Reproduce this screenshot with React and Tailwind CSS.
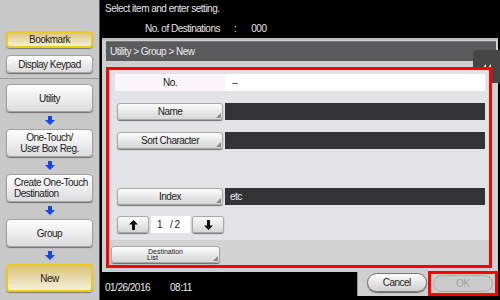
const font = { fontFamily: '"Liberation Sans", Arial, sans-serif' };

const BlueArrow = () => (
	<div className="flex h-[17px] items-center justify-center">
		<svg width="10" height="9" viewBox="0 0 10 9">
			<path d="M3 0h4v4h3L5 9 0 4h3z" fill="#1746e8" />
		</svg>
	</div>
);

const SideBtn = ({ children, gold, left }) => (
	<div
		className={
			gold
				? "ml-[6px] flex h-[28px] w-[87px] items-center justify-center whitespace-nowrap rounded-[4px] border-2 border-[#eccb1c] bg-linear-to-b from-[#d9c27c] to-[#f6f0d8] text-[10px] leading-[11px] text-[#222] shadow-[0_1px_1px_rgba(0,0,0,0.4)]"
				: left
				? "ml-[6px] flex h-[28px] w-[87px] flex-col justify-center whitespace-nowrap rounded-[4px] border border-[#a2a2a2] bg-linear-to-b from-[#fefefe] to-[#dcdcdc] pl-[7px] text-[10px] leading-[11px] text-[#222] shadow-[0_1px_1px_rgba(0,0,0,0.45)]"
				: "ml-[6px] flex h-[28px] w-[87px] flex-col items-center justify-center whitespace-nowrap rounded-[4px] border border-[#a2a2a2] bg-linear-to-b from-[#fefefe] to-[#dcdcdc] text-center text-[10px] leading-[11px] text-[#222] shadow-[0_1px_1px_rgba(0,0,0,0.45)]"
		}
	>
		{children}
	</div>
);

const Corner = () => (
	<svg className="absolute bottom-[1px] right-[1px]" width="5" height="5" viewBox="0 0 5 5">
		<path d="M5 0v5H0z" fill="#8a8a8a" />
	</svg>
);

const FieldBtn = ({ children }) => (
	<div className="relative mx-[2px] flex h-[17px] w-[106px] items-center justify-center whitespace-nowrap rounded-[3px] border border-[#a9a9a9] bg-linear-to-b from-[#fbfbfb] to-[#d6d6d6] text-[10px] text-[#222] shadow-[0_1px_1px_rgba(0,0,0,0.5)]">
		{children}
		<Corner />
	</div>
);

const Row = ({ label, className }) => (
	<div className={className}>
		<div className="flex h-[17px] items-stretch pl-[6px] pr-[4px]">
			<div className="flex w-[110px] items-center">
				<FieldBtn>{label}</FieldBtn>
			</div>
			<div className="w-[260px] bg-[#333335]" />
		</div>
	</div>
);

export default function App() {
	return (
		<div className="flex h-[300px] w-[500px] overflow-hidden bg-black tracking-[-0.5px]" style={font}>
			<div className="flex w-[100px] flex-col border-r border-[#555] bg-[#c8c8c8]">
				<div className="h-[79px] border-b border-[#9a9a9a] pt-[31px]">
					<div className="ml-[6px] flex h-[17px] w-[87px] items-center justify-center rounded-[4px] border-2 border-[#eccb1c] bg-linear-to-b from-[#dcc57e] to-[#f6f0d8] text-[10px] text-[#222] shadow-[0_1px_1px_rgba(0,0,0,0.4)]">
						Bookmark
					</div>
					<div className="ml-[6px] mt-[7px] flex h-[18px] w-[87px] items-center justify-center whitespace-nowrap rounded-[4px] border border-[#a2a2a2] bg-linear-to-b from-[#fefefe] to-[#dcdcdc] text-[10px] text-[#222] shadow-[0_1px_1px_rgba(0,0,0,0.45)]">
						Display Keypad
					</div>
				</div>
				<div className="pt-[5px]">
					<SideBtn>Utility</SideBtn>
					<BlueArrow />
					<SideBtn>
						<span>One-Touch/</span>
						<span>User Box Reg.</span>
					</SideBtn>
					<BlueArrow />
					<SideBtn left>
						<span>Create One-Touch</span>
						<span>Destination</span>
					</SideBtn>
					<BlueArrow />
					<SideBtn>Group</SideBtn>
					<BlueArrow />
					<SideBtn gold>New</SideBtn>
				</div>
			</div>

			<div className="relative flex flex-1 flex-col">
				<div className="h-[38px] whitespace-nowrap pl-[5px] text-[10px] text-[#e6e6e6]">
					<div className="pt-[3px] leading-[12px]">Select item and enter setting.</div>
					<div className="mt-[8px] flex leading-[12px]">
						<span className="ml-[40px]">No. of Destinations</span>
						<span className="ml-[14px]">:</span>
						<span className="ml-[15px]">000</span>
					</div>
				</div>

				<div className="mx-[2px] flex h-[234px] flex-col border-t-2 border-[#bdbdbd] bg-[#cfcfcf] pl-[4px] pr-[2px]">
					<div className="mt-[1px] flex h-[20px] items-center border-t border-[#777] bg-[#5b5a5d] pl-[4px] text-[10px] text-[#ececec]">
						Utility &gt; Group &gt; New
					</div>
					<div className="h-[6px]" />
					<div className="relative z-10 flex h-[201px] w-[386px] flex-col border-[3px] border-[#ff0000]">
						<div className="h-[170px] bg-[#e3e2e5] pt-[4px]">
							<div className="flex h-[17px] pl-[6px] pr-[4px]">
								<div className="flex w-[110px] items-center justify-center bg-[#f8f4f8] text-[10px] text-[#222]">No.</div>
								<div className="flex w-[260px] items-center bg-white pl-[7px] text-[10px] text-[#333]">--</div>
							</div>
							<Row label="Name" className="mt-[12px]" />
							<Row label="Sort Character" className="mt-[12px]" />
							<div className="mt-[39px] flex h-[17px] pl-[6px] pr-[4px]">
								<div className="flex w-[110px] items-center">
									<FieldBtn>Index</FieldBtn>
								</div>
								<div className="flex w-[260px] items-center bg-[#333335] pl-[5px] text-[10px] text-[#f0f0f0]">etc</div>
							</div>
							<div className="mt-[11px] flex h-[17px] items-center pl-[8px]">
								<div className="flex h-[17px] w-[32px] items-center justify-center rounded-[3px] border border-[#a9a9a9] bg-linear-to-b from-[#fbfbfb] to-[#d6d6d6] shadow-[0_1px_1px_rgba(0,0,0,0.5)]">
									<svg width="9" height="10" viewBox="0 0 9 10">
										<path d="M4.5 0L9 4.5H6V10H3V4.5H0z" fill="#111" />
									</svg>
								</div>
								<div className="mx-[2px] flex h-[17px] w-[39px] items-center bg-white pl-[6px] text-[10px] text-[#222]">
									<span>1</span>
									<span className="ml-[8px]">/ 2</span>
								</div>
								<div className="flex h-[17px] w-[32px] items-center justify-center rounded-[3px] border border-[#a9a9a9] bg-linear-to-b from-[#fbfbfb] to-[#d6d6d6] shadow-[0_1px_1px_rgba(0,0,0,0.5)]">
									<svg width="9" height="10" viewBox="0 0 9 10">
										<path d="M4.5 10L9 5.5H6V0H3V5.5H0z" fill="#111" />
									</svg>
								</div>
							</div>
						</div>
						<div className="flex-1 bg-[#d3d3d3] pl-[2px] pt-[6px]">
							<div className="relative flex h-[17px] w-[109px] flex-col items-center justify-center rounded-[3px] border border-[#a9a9a9] bg-linear-to-b from-[#fbfbfb] to-[#d6d6d6] text-[7px] leading-[6px] tracking-normal text-[#222] shadow-[0_1px_1px_rgba(0,0,0,0.5)]">
								<span>Destination</span>
								<span className="-ml-[26px]">List</span>
								<Corner />
							</div>
						</div>
					</div>
				</div>

				<div className="flex flex-1">
					<div className="flex flex-1 items-center pl-[5px] pt-[2px] text-[10px] text-[#ececec]">
						<span>01/26/2016</span>
						<span className="ml-[20px]">08:11</span>
					</div>
					<div className="mb-[4px] mr-[2px] flex w-[141px] items-start border-l border-[#9a9a9a] bg-[#cfcfcf] pl-[9px]">
						<div className="mt-[1px] flex h-[19px] w-[60px] items-center justify-center rounded-full border border-[#777] bg-linear-to-b from-[#fdfdfd] to-[#cfcfcf] text-[10px] text-[#222] shadow-[0_1px_1px_rgba(0,0,0,0.5)]">
							Cancel
						</div>
						<div className="-mt-[1px] ml-[1px] flex h-[25px] w-[71px] items-center justify-center border-[3px] border-[#ff0000]">
							<div className="flex h-[17px] w-[60px] items-center justify-center rounded-full border border-[#aaa] bg-[#cbcbcb] text-[10px] text-[#a4a4a4]">
								OK
							</div>
						</div>
					</div>
				</div>

				<div className="absolute right-0 top-[50px] z-0 flex h-[33px] w-[27px] items-center justify-center rounded-l-[3px] bg-[#464646]">
					<svg width="11" height="8" viewBox="0 0 11 8">
						<path d="M5 1L1 6h4zM10 1L6 6h4z" fill="#f2f2f2" />
					</svg>
				</div>
			</div>
		</div>
	);
}
